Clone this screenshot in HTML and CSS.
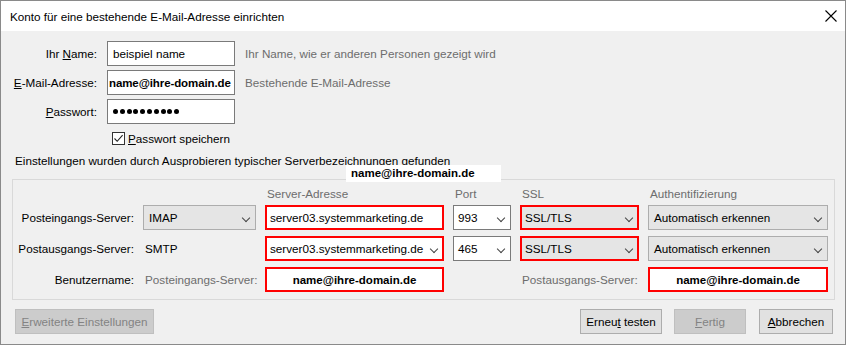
FILE: index.html
```html
<!DOCTYPE html>
<html lang="de">
<head>
    <meta charset="UTF-8">
    <meta name="viewport" content="width=device-width, initial-scale=1.0">
    <title>Konto einrichten</title>
    <link rel="stylesheet" href="styles.css">
</head>
<body>
<div class="window">
    <div class="titlebar">
        <span class="title">Konto für eine bestehende E-Mail-Adresse einrichten</span>
        <svg class="close" width="12" height="12" viewBox="0 0 12 12">
            <path d="M0.5 0.5 L11.5 11.5 M11.5 0.5 L0.5 11.5" stroke="#000" stroke-width="1.1" fill="none"/>
        </svg>
    </div>

    <div class="content">
        <div class="account">
            <label class="lbl">Ihr <u>N</u>ame:</label>
            <div class="field">beispiel name</div>
            <div class="hint">Ihr Name, wie er anderen Personen gezeigt wird</div>

            <label class="lbl"><u>E</u>-Mail-Adresse:</label>
            <div class="field field-bold">name@ihre-domain.de</div>
            <div class="hint">Bestehende E-Mail-Adresse</div>

            <label class="lbl"><u>P</u>asswort:</label>
            <div class="field dots">
                <i></i><i></i><i></i><i></i><i></i><i></i><i></i><i></i><i></i><i></i>
            </div>
            <div></div>

            <div></div>
            <div class="remember">
                <span class="checkbox">
                    <svg width="11" height="11" viewBox="0 0 11 11"><path d="M1.5 5.5 L4.2 8.3 L9.6 2.2" stroke="#222" stroke-width="1.1" fill="none"/></svg>
                </span>
                <span><u>P</u>asswort speichern</span>
            </div>
        </div>

        <p class="info">Einstellungen wurden durch Ausprobieren typischer Serverbezeichnungen gefunden</p>

        <div class="servers">
            <div></div>
            <div></div>
            <div class="head">Server-Adresse</div>
            <div class="head">Port</div>
            <div class="head">SSL</div>
            <div class="head">Authentifizierung</div>

            <div class="rowlbl">Posteingangs-Server:</div>
            <div class="select">IMAP<span class="chev"></span></div>
            <div class="box red">server03.systemmarketing.de</div>
            <div class="box">993<span class="chev"></span></div>
            <div class="select red">SSL/TLS<span class="chev"></span></div>
            <div class="select">Automatisch erkennen<span class="chev"></span></div>

            <div class="rowlbl">Postausgangs-Server:</div>
            <div class="plain">SMTP</div>
            <div class="box red">server03.systemmarketing.de<span class="chev"></span></div>
            <div class="box">465<span class="chev"></span></div>
            <div class="select red">SSL/TLS<span class="chev"></span></div>
            <div class="select">Automatisch erkennen<span class="chev"></span></div>

            <div class="rowlbl">Benutzername:</div>
            <div class="plain muted">Posteingangs-Server:</div>
            <div class="box red user">name@ihre-domain.de</div>
            <div></div>
            <div class="plain muted">Postausgangs-Server:</div>
            <div class="box red user">name@ihre-domain.de</div>
        </div>

        <div class="actions">
            <button class="btn btn-wide" disabled><u>E</u>rweiterte Einstellungen</button>
            <div class="spacer"></div>
            <button class="btn btn-retry">Erneu<u>t</u> testen</button>
            <button class="btn btn-done" disabled><u>F</u>ertig</button>
            <button class="btn btn-cancel"><u>A</u>bbrechen</button>
        </div>
    </div>

    <div class="paste">name@ihre-domain.de</div>
</div>
</body>
</html>
```

FILE: styles.css
```css
* {
    box-sizing: border-box;
}
body {
    margin: 0;
    background: #ffffff;
    font-family: "Liberation Sans", Arial, sans-serif;
    font-size: 11.7px;
    color: #000;
}
.window {
    position: relative;
    width: 846px;
    height: 345px;
    border: 1px solid #8a8a8a;
    background: #f0f0f0;
}
.titlebar {
    height: 30px;
    background: #fff;
    display: flex;
    align-items: center;
    justify-content: space-between;
    padding: 0 8px 0 9px;
}
.title {
    padding-top: 1px;
}
.close {
    display: block;
}
.content {
    padding: 10px 10px 0 11px;
}
.account {
    display: grid;
    grid-template-columns: 96px 128px auto;
    grid-auto-rows: 25px;
    column-gap: 10px;
    row-gap: 4px;
    align-items: center;
    margin-left: -11px;
    white-space: nowrap;
}
.lbl {
    text-align: right;
}
.field {
    height: 25px;
    border: 1px solid #7a7a7a;
    background: #fff;
    padding: 0 5px;
    display: flex;
    align-items: center;
}
.field-bold {
    font-weight: bold;
    font-size: 11.5px;
    padding: 0 1px;
    letter-spacing: -0.1px;
}
.dots {
    gap: 1.8px;
}
.dots i {
    width: 5px;
    height: 5px;
    border-radius: 50%;
    background: #000;
}
.hint {
    color: #6d6d6d;
}
.remember {
    display: flex;
    align-items: center;
    gap: 3px;
    padding-left: 5px;
    height: 20px;
    align-self: start;
}
.checkbox {
    width: 13px;
    height: 13px;
    border: 1px solid #333;
    background: #fff;
    display: flex;
}
.info {
    margin: 0 0 0 3px;
    line-height: 16px;
    white-space: nowrap;
}
.servers {
    margin-top: 10px;
    border: 1px solid #d9d9d9;
    padding: 6px 0 7px 0;
    display: grid;
    grid-template-columns: 121px 113px 179px 58px 119px 180px;
    grid-template-rows: 13px 25px 25px 25px;
    column-gap: 9px;
    row-gap: 6px;
    align-items: center;
    white-space: nowrap;
}
.servers .head {
    color: #6d6d6d;
    padding-left: 2px;
    line-height: 16px;
    align-self: start;
}
.rowlbl {
    text-align: right;
}
.plain {
    padding-left: 2px;
}
.muted {
    color: #6d6d6d;
}
.select,
.box {
    position: relative;
    height: 25px;
    display: flex;
    align-items: center;
    padding-left: 5px;
}
.select {
    background: #e5e5e5;
    border: 1px solid #adadad;
}
.box {
    background: #fff;
    border: 1px solid #7a7a7a;
    padding-left: 4px;
}
.red {
    border: 2px solid #ff0000;
    padding-left: 3px;
}
.user {
    font-weight: bold;
    font-size: 11.5px;
    justify-content: center;
    padding-left: 0;
}
.chev {
    position: absolute;
    right: 6px;
    top: 9px;
    width: 6px;
    height: 6px;
    border-right: 1px solid #444;
    border-bottom: 1px solid #444;
    transform: rotate(45deg);
}
.red .chev {
    right: 5px;
    top: 8px;
}
.actions {
    display: flex;
    margin-top: 9px;
    gap: 12px;
    padding: 0 2px 0 3px;
}
.spacer {
    flex: 1;
}
.btn {
    height: 25px;
    font-family: "Liberation Sans", Arial, sans-serif;
    font-size: 11.7px;
    background: #e1e1e1;
    border: 1px solid #adadad;
    color: #000;
    padding: 0;
}
.btn:disabled {
    background: #cccccc;
    border-color: #bfbfbf;
    color: #838383;
}
.btn-wide {
    width: 139px;
}
.btn-retry {
    width: 82px;
}
.btn-done {
    width: 72px;
}
.btn-cancel {
    width: 74px;
    margin-left: 1px;
}
.paste {
    position: absolute;
    left: 345px;
    top: 164px;
    width: 155px;
    height: 17px;
    background: #fff;
    font-weight: bold;
    font-size: 11.5px;
    padding: 2px 0 0 5px;
}
```
